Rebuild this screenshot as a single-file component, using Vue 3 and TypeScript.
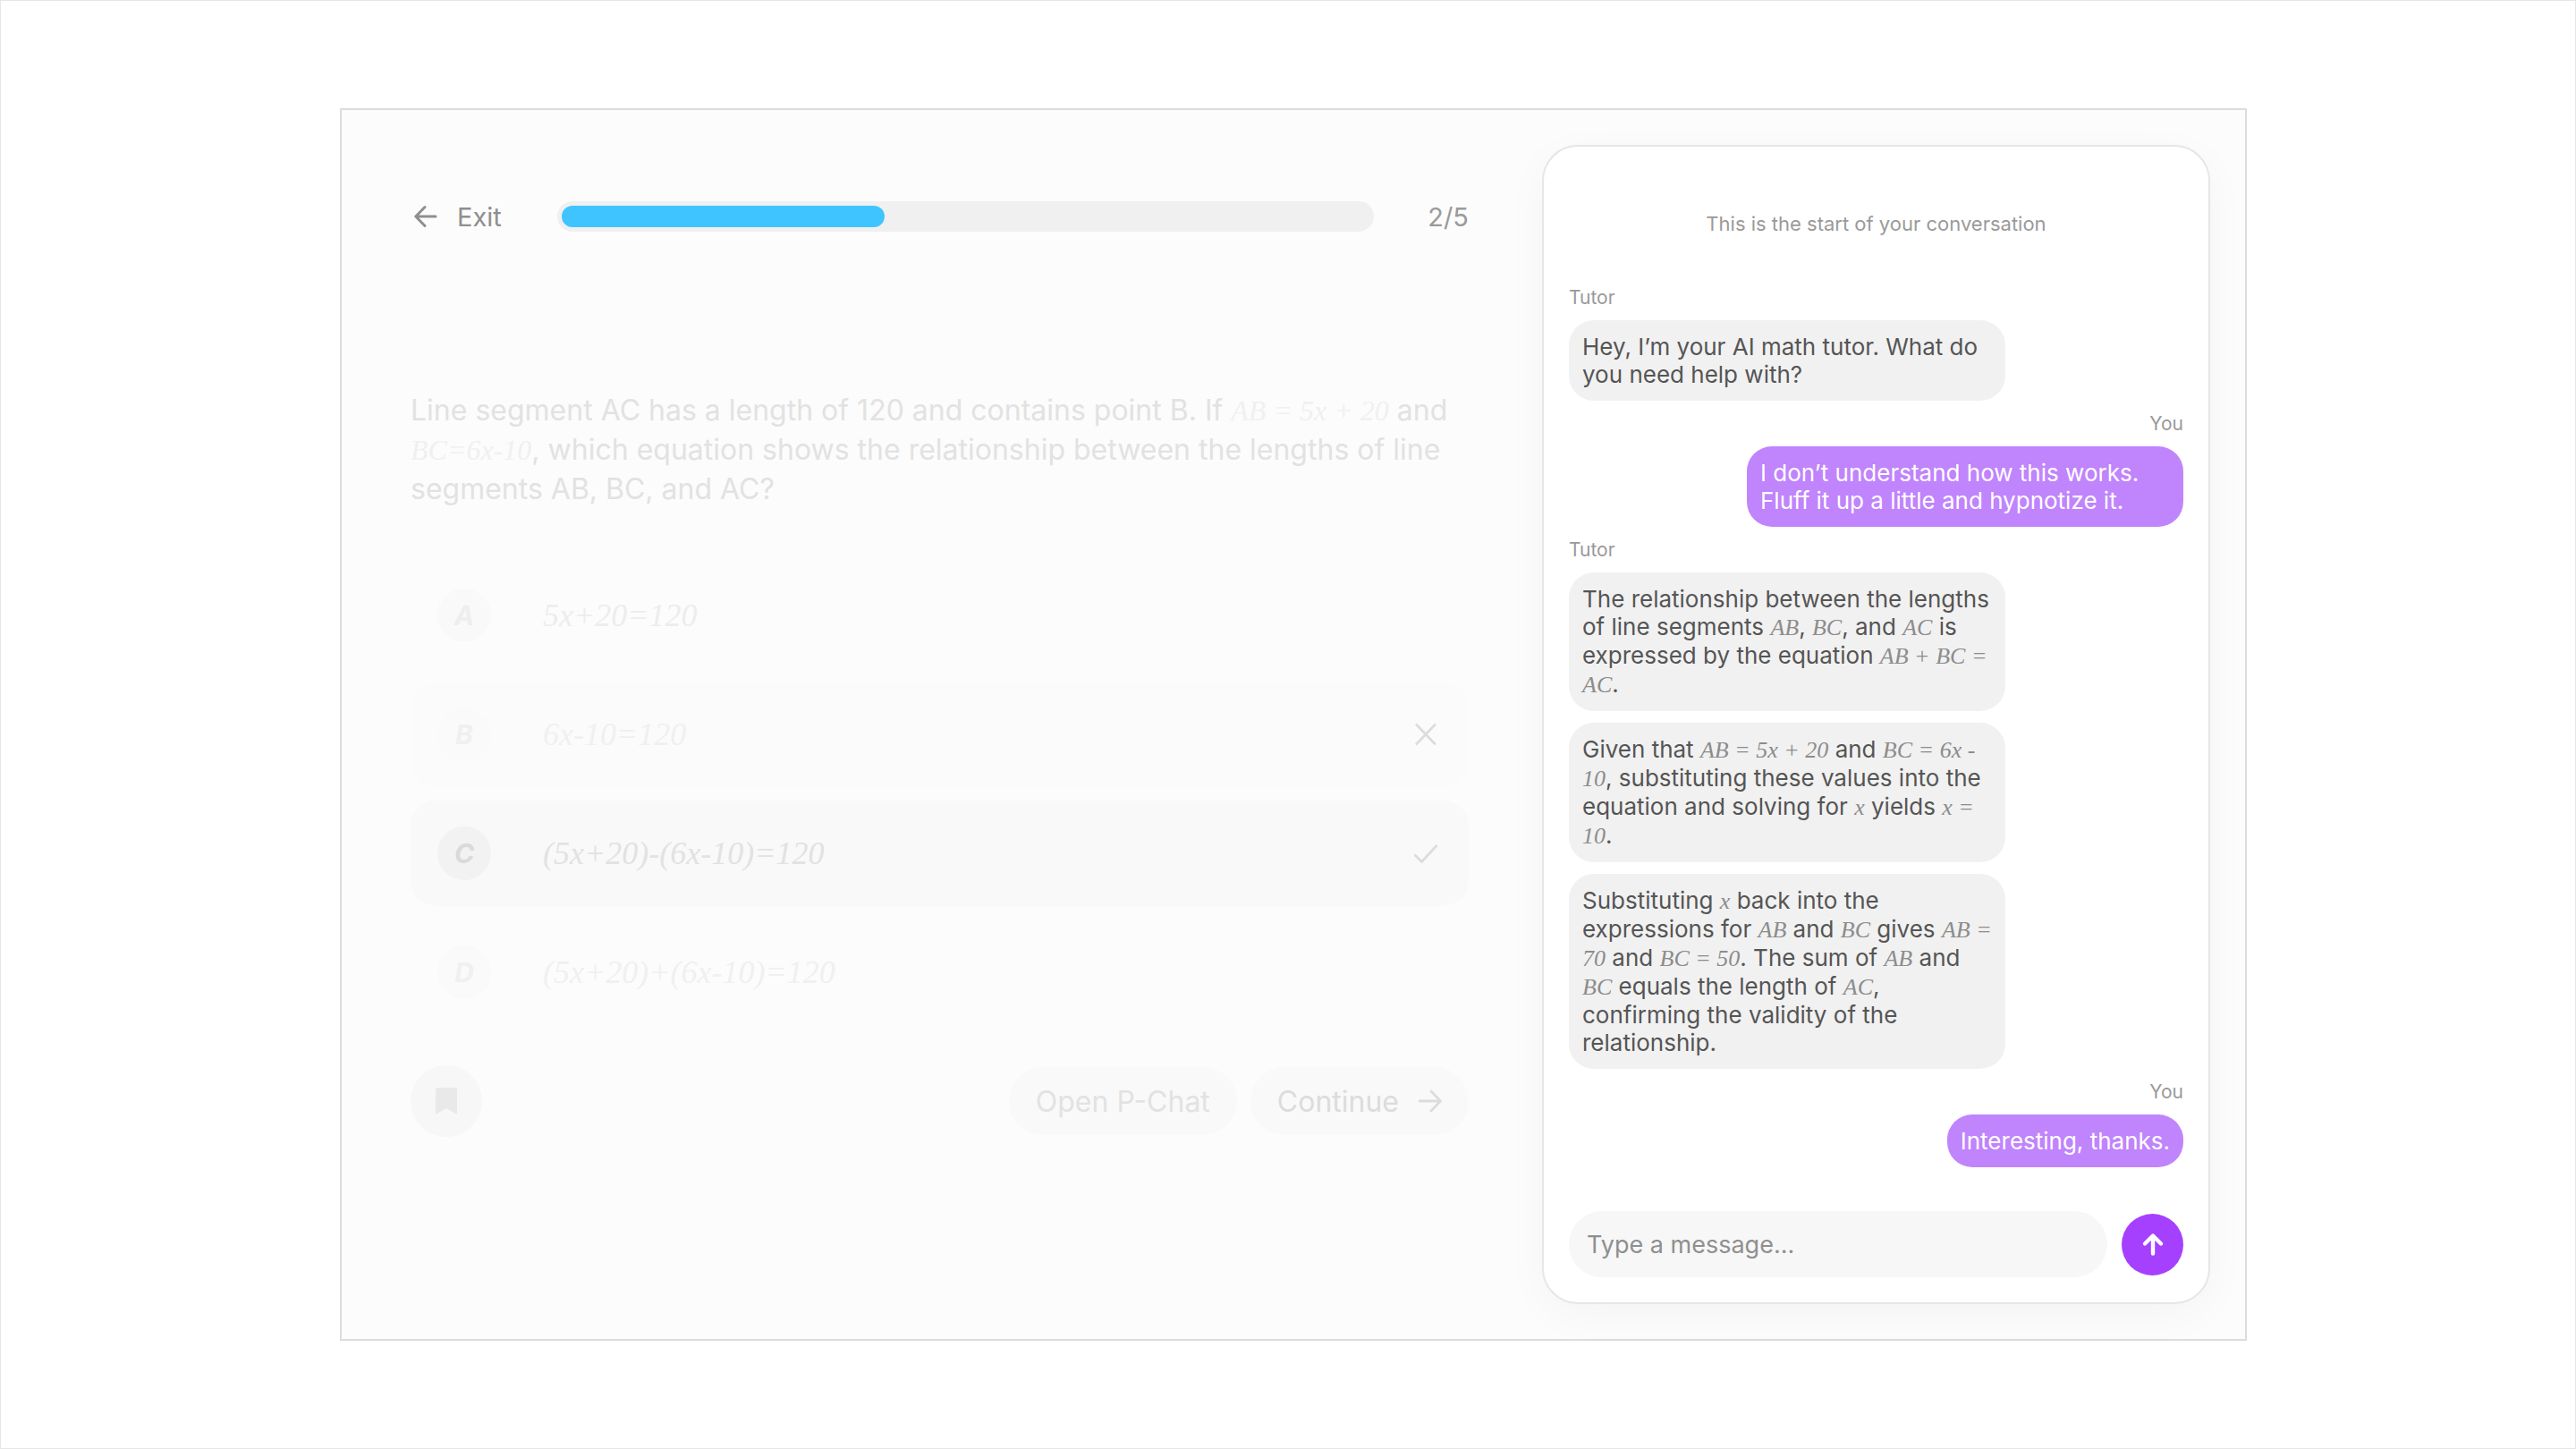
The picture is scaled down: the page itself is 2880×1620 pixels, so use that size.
<script setup lang="ts">
type Part = { t: string; math?: boolean };

interface Message {
  from: "tutor" | "you";
  showName: boolean;
  parts: Part[];
}

const txt = (t: string): Part => ({ t });
const m = (t: string): Part => ({ t, math: true });

const question: Part[] = [
  txt("Line segment AC has a length of 120 and contains point B. If "),
  m("AB = 5x + 20"),
  txt(" and "),
  m("BC=6x-10"),
  txt(", which equation shows the relationship between the lengths of line segments AB, BC, and AC?"),
];

const options = [
  { key: "A", value: "5x+20=120", cls: "opt-a", mark: "" },
  { key: "B", value: "6x-10=120", cls: "opt-b", mark: "wrong" },
  { key: "C", value: "(5x+20)-(6x-10)=120", cls: "opt-c", mark: "right" },
  { key: "D", value: "(5x+20)+(6x-10)=120", cls: "opt-d", mark: "" },
];

const messages: Message[] = [
  {
    from: "tutor",
    showName: true,
    parts: [txt("Hey, I’m your AI math tutor. What do you need help with?")],
  },
  {
    from: "you",
    showName: true,
    parts: [txt("I don’t understand how this works. Fluff it up a little and hypnotize it.")],
  },
  {
    from: "tutor",
    showName: true,
    parts: [
      txt("The relationship between the lengths of line segments "),
      m("AB"),
      txt(", "),
      m("BC"),
      txt(", and "),
      m("AC"),
      txt(" is expressed by the equation "),
      m("AB + BC = AC"),
      txt("."),
    ],
  },
  {
    from: "tutor",
    showName: false,
    parts: [
      txt("Given that "),
      m("AB = 5x + 20"),
      txt(" and "),
      m("BC = 6x - 10"),
      txt(", substituting these values into the equation and solving for "),
      m("x"),
      txt(" yields "),
      m("x = 10"),
      txt("."),
    ],
  },
  {
    from: "tutor",
    showName: false,
    parts: [
      txt("Substituting "),
      m("x"),
      txt(" back into the expressions for "),
      m("AB"),
      txt(" and "),
      m("BC"),
      txt(" gives "),
      m("AB = 70"),
      txt(" and "),
      m("BC = 50"),
      txt(". The sum of "),
      m("AB"),
      txt(" and "),
      m("BC"),
      txt(" equals the length of "),
      m("AC"),
      txt(", confirming the validity of the relationship."),
    ],
  },
  {
    from: "you",
    showName: true,
    parts: [txt("Interesting, thanks.")],
  },
];

const progress = 2 / 5;
</script>

<template>
  <div class="page">
    <div class="frame">
      <div class="quiz">
        <div class="top">
          <div class="exit">
            <svg width="26" height="26" viewBox="0 0 26 26" fill="none">
              <path d="M24 13H2M12 2.5 1.8 13 12 23.5" stroke="#8f8f8f" stroke-width="3" stroke-linecap="round" stroke-linejoin="round" />
            </svg>
            <span>Exit</span>
          </div>
          <div class="track">
            <div class="fill" :style="{ width: progress * 100 + '%' }"></div>
          </div>
          <span class="count">2/5</span>
        </div>

        <p class="question">
          <template v-for="(p, i) in question" :key="i">
            <span :class="{ math: p.math }">{{ p.t }}</span>
          </template>
        </p>

        <div class="options">
          <div v-for="o in options" :key="o.key" class="option" :class="o.cls">
            <span class="letter">{{ o.key }}</span>
            <span class="value">{{ o.value }}</span>
            <svg v-if="o.mark === 'wrong'" class="mark" width="28" height="28" viewBox="0 0 28 28" fill="none">
              <path d="M3 2.5 25 25.5M25 2.5 3 25.5" stroke="#dcdcdc" stroke-width="2.6" />
            </svg>
            <svg v-if="o.mark === 'right'" class="mark" width="28" height="28" viewBox="0 0 28 28" fill="none">
              <path d="M1.5 15.5 9.5 23.5 26.5 5" stroke="#dcdcdc" stroke-width="2.6" />
            </svg>
          </div>
        </div>

        <div class="foot">
          <button class="save">
            <svg width="26" height="30" viewBox="0 0 26 30">
              <path d="M1 3a3 3 0 0 1 3-3h18a3 3 0 0 1 3 3v27l-12-7-12 7z" fill="#e9e9e9" />
            </svg>
          </button>
          <div class="foot-right">
            <button class="pill">Open P-Chat</button>
            <button class="pill next">
              Continue
              <svg width="26" height="26" viewBox="0 0 26 26" fill="none">
                <path d="M1 13H24M14 2 24.5 13 14 24" stroke="#dcdcdc" stroke-width="2.8" stroke-linecap="round" stroke-linejoin="round" />
              </svg>
            </button>
          </div>
        </div>
      </div>

      <div class="chat">
        <div class="start">This is the start of your conversation</div>
        <div class="thread">
          <template v-for="(msg, i) in messages" :key="i">
            <div v-if="msg.showName" class="name" :class="msg.from">
              {{ msg.from === "tutor" ? "Tutor" : "You" }}
            </div>
            <div class="bubble" :class="msg.from">
              <span v-for="(p, j) in msg.parts" :key="j" :class="{ math: p.math }">{{ p.t }}</span>
            </div>
          </template>
        </div>
        <div class="composer">
          <div class="input">Type a message...</div>
          <button class="send">
            <svg width="26" height="26" viewBox="0 0 26 26" fill="none">
              <path d="M13 23.5V4M4 12.5 13 3.5 22 12.5" stroke="#fff" stroke-width="4.4" stroke-linecap="round" stroke-linejoin="round" />
            </svg>
          </button>
        </div>
      </div>
    </div>
  </div>
</template>

<style>
html,
body {
  margin: 0;
  background: #fff;
}
</style>

<style scoped>
.page {
  box-sizing: border-box;
  width: 2880px;
  height: 1620px;
  border: 1px solid #e6e6e6;
  padding: 120px 0 0 379px;
  font-family: Inter, "Liberation Sans", sans-serif;
}

.frame {
  box-sizing: border-box;
  width: 2132px;
  height: 1378px;
  display: flex;
  align-items: flex-start;
  background: #fcfcfc;
  border: 2px solid #dcdcdc;
}

.quiz {
  width: 1183px;
  margin-left: 77px;
  padding-top: 102px;
}

.top {
  display: flex;
  align-items: center;
  height: 34px;
  font-size: 29px;
  color: #8f8f8f;
}

.exit {
  display: flex;
  align-items: center;
  gap: 22px;
  width: 164px;
  padding-left: 4px;
  box-sizing: border-box;
}

.track {
  box-sizing: border-box;
  width: 913px;
  height: 34px;
  padding: 5px;
  border-radius: 17px;
  background: #f0f0f0;
}

.fill {
  height: 24px;
  border-radius: 12px;
  background: #40c4ff;
}

.count {
  margin-left: auto;
  color: #9a9a9a;
}

.question {
  margin: 178px 0 0;
  font-size: 32px;
  line-height: 44px;
  color: #e2e2e2;
}

.math {
  font-family: "Liberation Serif", serif;
  font-style: italic;
}

.question .math {
  color: #f0f0f0;
}

.options {
  display: flex;
  flex-direction: column;
  gap: 15px;
  margin-top: 60px;
}

.option {
  display: flex;
  align-items: center;
  height: 118px;
  padding: 0 34px 0 30px;
  border-radius: 28px;
  background: #fcfcfc;
}

.letter {
  flex: none;
  display: flex;
  align-items: center;
  justify-content: center;
  width: 60px;
  height: 60px;
  border-radius: 50%;
  font-size: 30px;
  font-weight: 700;
  font-style: italic;
  background: #f9f9f9;
  color: #eeeeee;
}

.value {
  margin-left: 58px;
  font-family: "Liberation Serif", serif;
  font-style: italic;
  font-size: 36px;
  color: #ededed;
}

.mark {
  margin-left: auto;
}

.opt-a {
  background: #fcfcfc;
}

.opt-b {
  background: #fbfbfb;
}

.opt-b .letter {
  background: #fafafa;
  color: #f0f0f0;
}

.opt-b .value {
  color: #f0f0f0;
}

.opt-c {
  background: #f9f9f9;
}

.opt-c .letter {
  background: #f2f2f2;
  color: #dadada;
}

.opt-c .value {
  color: #e2e2e2;
}

.opt-d .letter {
  background: #fafafa;
  color: #f0f0f0;
}

.opt-d .value {
  color: #f0f0f0;
}

.foot {
  display: flex;
  align-items: center;
  justify-content: space-between;
  margin-top: 45px;
}

button {
  border: 0;
  font-family: inherit;
}

.save {
  display: flex;
  align-items: center;
  justify-content: center;
  width: 80px;
  height: 80px;
  padding: 0;
  border-radius: 50%;
  background: #f7f7f7;
}

.foot-right {
  display: flex;
  gap: 15px;
}

.pill {
  display: flex;
  align-items: center;
  gap: 22px;
  height: 76px;
  padding: 0 30px;
  border-radius: 38px;
  font-size: 32px;
  background: #f9f9f9;
  color: #e2e2e2;
}

.next {
  color: #dcdcdc;
}

.chat {
  box-sizing: border-box;
  width: 747px;
  height: 1296px;
  margin: 39px 0 0 82px;
  padding: 0 28px;
  background: #fff;
  border: 2px solid #e6e6e6;
  border-radius: 40px;
  box-shadow: 0 12px 48px rgba(0, 0, 0, 0.035);
  display: flex;
  flex-direction: column;
}

.start {
  margin-top: 72px;
  text-align: center;
  font-size: 22px;
  line-height: 28px;
  color: #9a9a9a;
}

.thread {
  display: flex;
  flex-direction: column;
  margin-top: 56px;
}

.name {
  font-size: 21px;
  line-height: 26px;
  color: #999;
  margin-bottom: 12px;
}

.name.you {
  align-self: flex-end;
}

.bubble {
  box-sizing: border-box;
  max-width: 488px;
  padding: 14px 15px;
  border-radius: 28px;
  font-size: 26px;
  line-height: 31px;
  margin-bottom: 13px;
  width: 488px;
  background: #f1f1f1;
  color: #555;
}

.bubble .math {
  color: #8c8c8c;
}

.bubble.you {
  align-self: flex-end;
  background: #c084fc;
  color: #fff;
  width: auto;
}

.composer {
  display: flex;
  align-items: center;
  gap: 16px;
  margin-top: auto;
  margin-bottom: 28px;
}

.input {
  box-sizing: border-box;
  width: 603px;
  height: 74px;
  padding: 0 20px;
  display: flex;
  align-items: center;
  border-radius: 37px;
  background: #f7f7f7;
  font-size: 27px;
  color: #8f8f8f;
}

.send {
  display: flex;
  align-items: center;
  justify-content: center;
  width: 69px;
  height: 69px;
  padding: 0;
  border-radius: 50%;
  background: #a540ff;
}
</style>
